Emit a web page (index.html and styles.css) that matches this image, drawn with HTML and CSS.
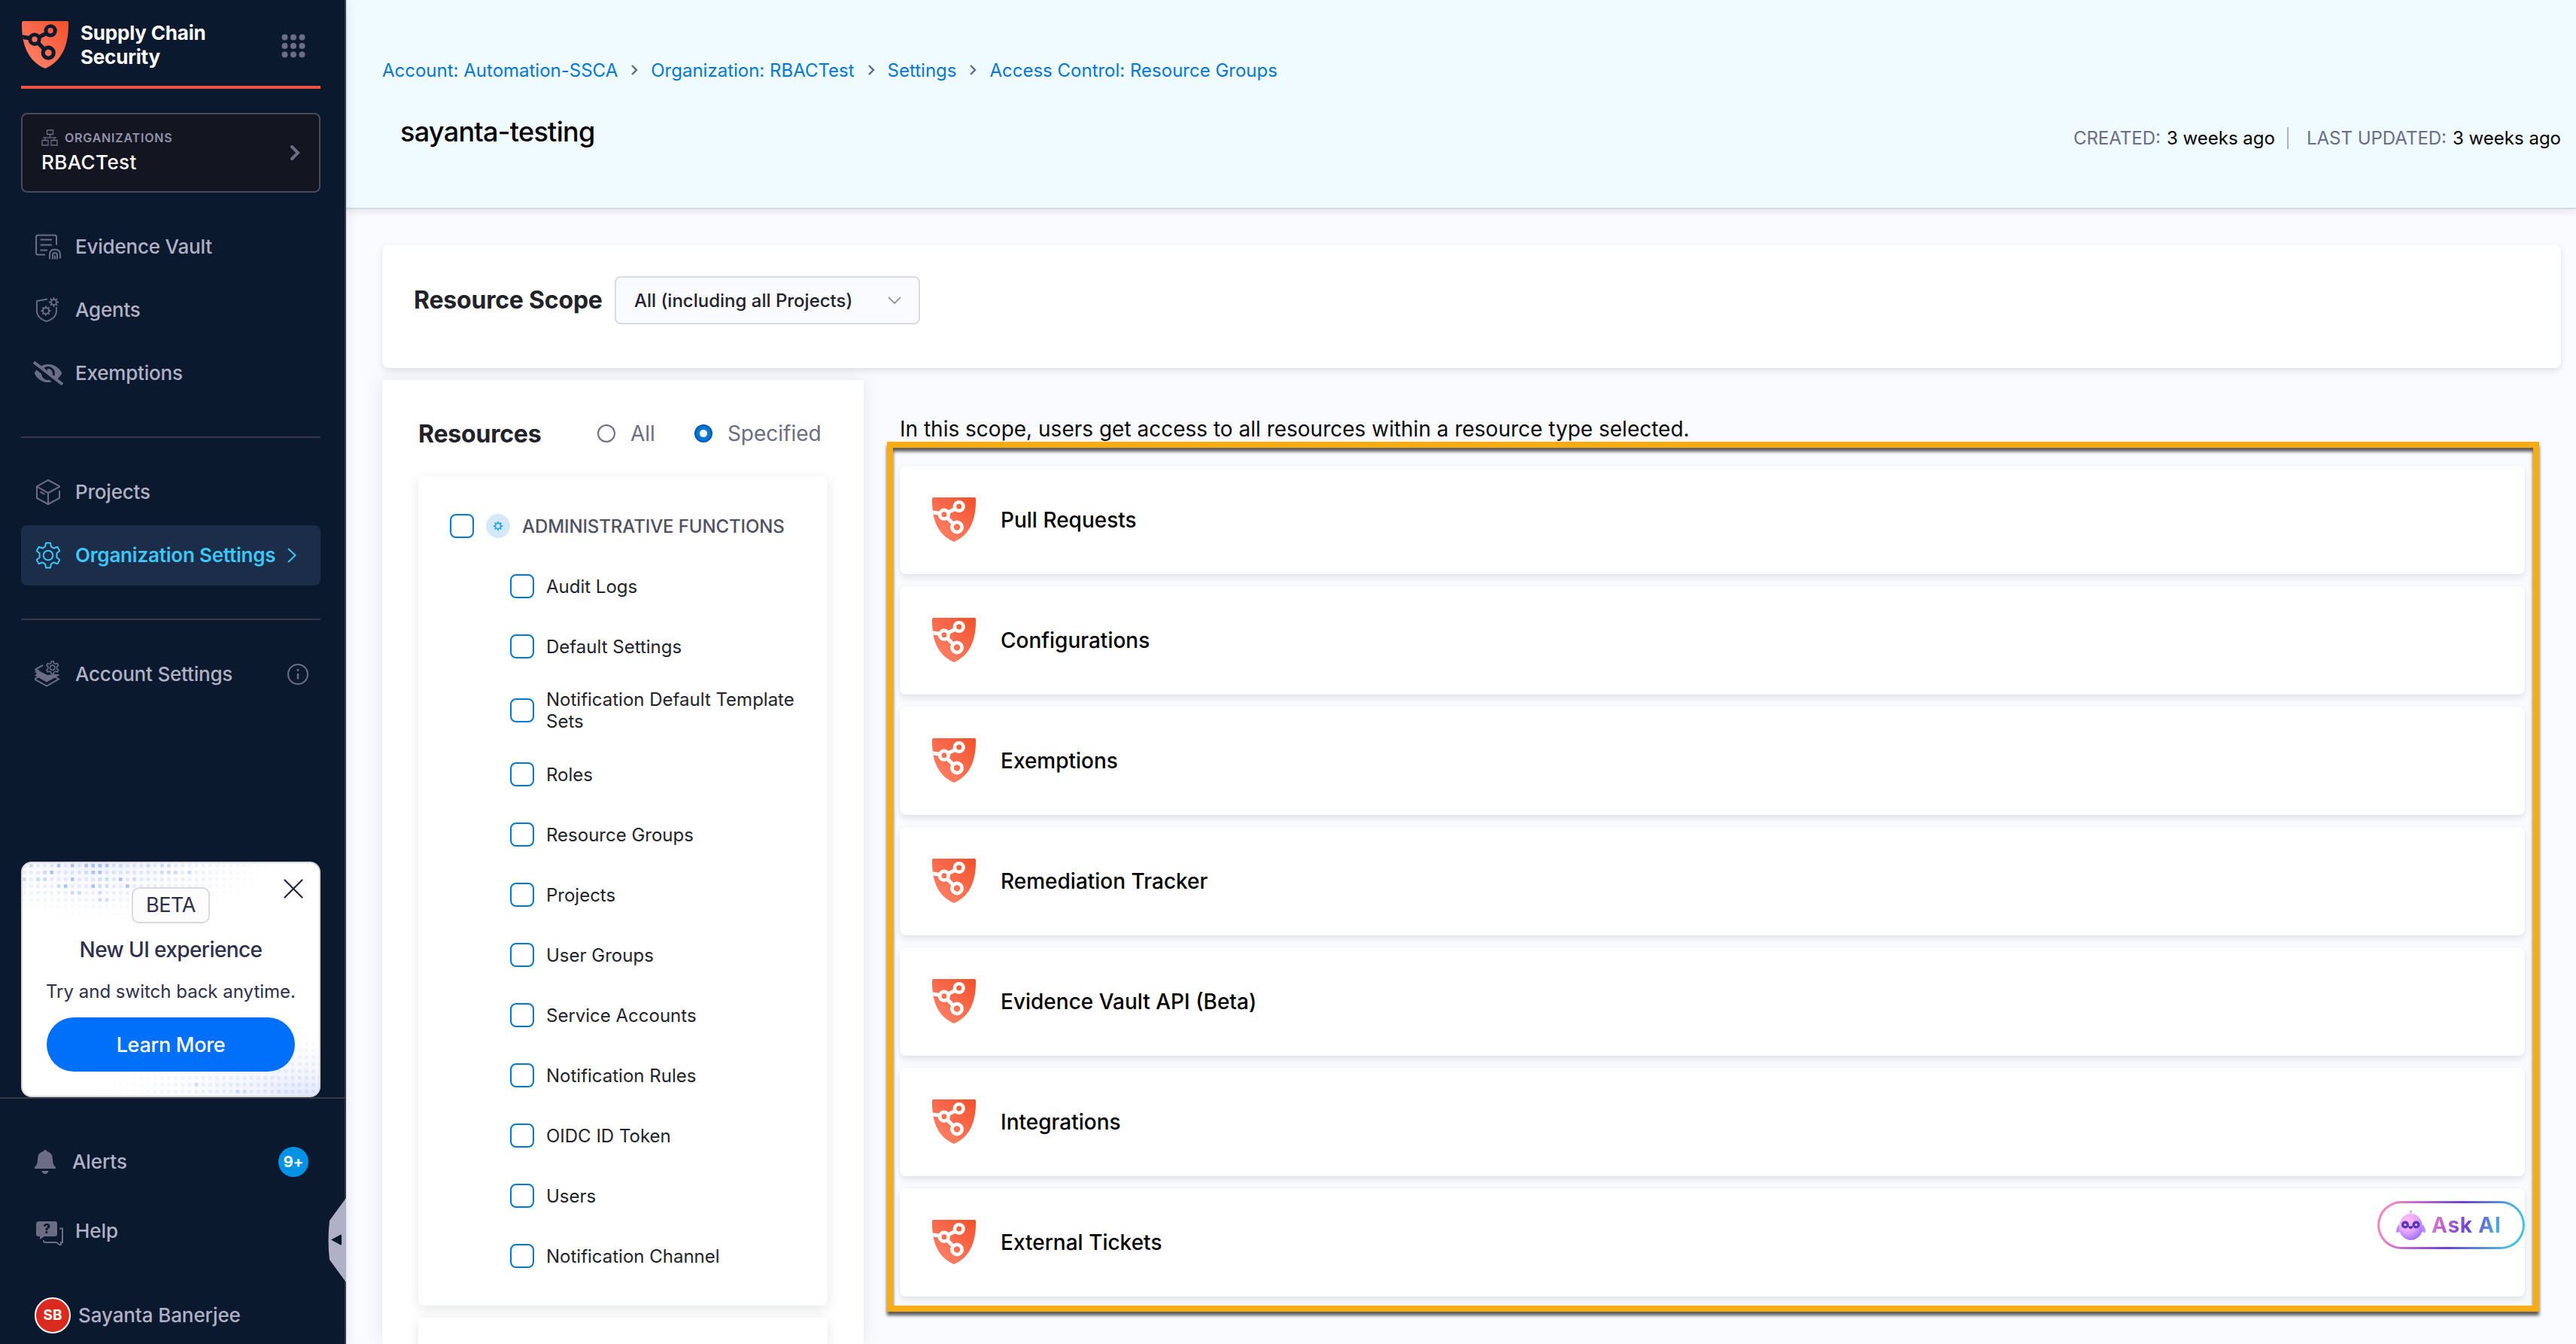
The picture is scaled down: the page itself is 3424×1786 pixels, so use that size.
FILE: index.html
```html
<!DOCTYPE html>
<html lang="en">
<head>
  <meta charset="UTF-8">
  <title>Resource Groups - sayanta-testing</title>
  <meta name="viewport" content="width=device-width, initial-scale=1.0">
  <link rel="stylesheet" href="styles.css">
</head>
<body>

  <!-- Shared icons -->
  <svg class="sprite" width="0" height="0">
    <defs>
      <linearGradient id="shield-fill" x1="1" y1="0" x2="0.2" y2="0.9">
        <stop offset="0" stop-color="#f24f2a"/>
        <stop offset="1" stop-color="#ff8066"/>
      </linearGradient>
      <clipPath id="shield-clip">
        <path d="M1.5 0h55Q58 0 58 1.500C58.500 27 52 49 29 59C6 49-.5 27 0 1.500Q0 0 1.500 0z"/>
      </clipPath>
    </defs>
    <symbol id="icon-shield" viewBox="0 0 58 59">
      <path fill="url(#shield-fill)" d="M1.500 0h55Q58 0 58 1.500C58.500 27 52 49 29 59C6 49-.5 27 0 1.500Q0 0 1.500 0z"/>
      <g clip-path="url(#shield-clip)" fill="none" stroke="currentColor">
        <path stroke-width="5" d="M-1 19.500l11 1.800M21 20l9-4.500M20 27l8 8"/>
        <circle cx="35.700" cy="12" r="5.800" stroke-width="4.600"/>
        <circle cx="15.900" cy="22.700" r="5.800" stroke-width="4.600"/>
        <circle cx="33" cy="39.500" r="6.600" stroke-width="4.800"/>
      </g>
    </symbol>
    <symbol id="icon-gear" viewBox="0 0 24 24">
      <path d="M10 1h4l.6 3.300 2.400 1.400 3.200-1.200 2 3.500-2.600 2.200v3.600l2.600 2.200-2 3.500-3.200-1.200-2.400 1.400-.6 3.300h-4l-.6-3.300L7 18.300l-3.200 1.200-2-3.500 2.600-2.200v-3.600L1.800 8l2-3.500L7 5.700l2.400-1.400z" fill="none" stroke="currentColor" stroke-linejoin="round"/>
      <circle cx="12" cy="12" r="4.200" fill="none" stroke="currentColor"/>
    </symbol>
  </svg>

  <div class="app">
    <aside class="sidebar">
      <div class="brand">
        <svg class="brand-logo"><use href="#icon-shield"/></svg>
        <div class="brand-name">Supply Chain<br>Security</div>
        <svg class="brand-grid" viewBox="0 0 32 32">
          <circle cx="4.500" cy="4.500" r="4"/><circle cx="16" cy="4.500" r="4"/><circle cx="27.500" cy="4.500" r="4"/>
          <circle cx="4.500" cy="16" r="4"/><circle cx="16" cy="16" r="4"/><circle cx="27.500" cy="16" r="4"/>
          <circle cx="4.500" cy="27.500" r="4"/><circle cx="16" cy="27.500" r="4"/><circle cx="27.500" cy="27.500" r="4"/>
        </svg>
      </div>

      <div class="org-box">
        <div class="org-info">
          <div class="org-label">
            <svg viewBox="0 0 22 22" width="22" height="22" fill="none" stroke="currentColor" stroke-width="1.300"><path d="M7.500 1h8v5.500h-8zM1 14.500h8V21H1zM13 14.500h8V21h-8zM11.500 6.500v4M2 10.800h18M5 11v3.500M17 11v3.500"/></svg>
            <span>ORGANIZATIONS</span>
          </div>
          <div class="org-name">RBACTest</div>
        </div>
        <svg class="org-arrow" viewBox="0 0 14 22"><path d="M3 3l8 8-8 8"/></svg>
      </div>

      <nav class="nav">
        <a class="nav-item">
          <svg viewBox="0 0 36 36"><path d="M29 15V4.500Q29 2 26.500 2h-22Q2 2 2 4.500v21Q2 28 4.500 28H14M7.500 8H23M7.500 15H23M7.500 22H17M20 34v-6q0-7 7-7t7 7v5M24 34v-5.500q0-3 3-3t3 3V34M27 29v5" transform="translate(0 .5)"/></svg>
          <span>Evidence Vault</span>
        </a>
        <a class="nav-item">
          <svg viewBox="0 0 36 36"><path stroke-width="1.800" d="M17 3.500L3 6v13q0 10 13 14 13-4 13-14v-5"/><g stroke-width="2"><circle cx="15" cy="19" r="4"/><path d="M15 12.500v2.500M15 23v2.500M8.500 19H11M19 19h2.500M10.400 14.400l1.800 1.800M17.800 21.800l1.800 1.800M19.600 14.400l-1.800 1.800M12.200 21.800l-1.800 1.800"/></g><g stroke-width="1.800"><circle cx="25.500" cy="7.500" r="3.500"/><path d="M25.500 1v3M25.500 11v3M19 7.500h3M29 7.500h3M21 3l2 2M28 10l2 2M30 3l-2 2M23 10l-2 2"/></g></svg>
          <span>Agents</span>
        </a>
        <a class="nav-item">
          <svg class="icon-eye" viewBox="0 0 640 512"><path d="M320 400c-75.850 0-137.250-58.710-142.900-133.110L72.200 185.820c-13.790 17.300-26.480 35.590-36.720 55.590a32.350 32.350 0 0 0 0 29.190C89.710 376.410 197.070 448 320 448c26.910 0 52.870-4 77.890-10.460L346 397.390a144.130 144.130 0 0 1-26 2.610zm313.820 58.100l-110.550-85.440a331.250 331.250 0 0 0 81.250-102.070 32.350 32.350 0 0 0 0-29.190C550.290 135.590 442.930 64 320 64a308.150 308.150 0 0 0-147.320 37.700L45.460 3.370A16 16 0 0 0 23 6.180L3.370 31.450A16 16 0 0 0 6.180 53.900l588.360 454.730a16 16 0 0 0 22.460-2.810l19.640-25.270a16 16 0 0 0-2.820-22.450zm-183.720-142l-39.300-30.380A94.750 94.750 0 0 0 416 256a94.760 94.760 0 0 0-121.310-92.210A47.650 47.650 0 0 1 304 192a46.640 46.640 0 0 1-1.540 10l-73.610-56.890A142.310 142.310 0 0 1 320 112a143.920 143.920 0 0 1 144 144c0 21.630-5.290 41.790-13.900 60.110z"/></svg>
          <span>Exemptions</span>
        </a>
        <hr>
        <a class="nav-item">
          <svg viewBox="0 0 36 36"><path d="M18 2l15 8v1L18 19 3 10.500zM3 10.500V26l15 8 15-8V16M18 19v15M7.500 17.500l6 3.300"/></svg>
          <span>Projects</span>
        </a>
        <a class="nav-item active">
          <svg class="icon-settings"><use href="#icon-gear"/></svg>
          <span>Organization Settings</span>
          <svg class="nav-arrow" viewBox="0 0 12 20"><path d="M1 1l9.500 9L1 19"/></svg>
        </a>
        <hr>
        <a class="nav-item">
          <svg viewBox="0 0 36 36"><path d="M11 6L1 11.500 6 14M27 21.500l5 3L16 33.500 0 24.500l5-3"/><path d="M0 14l4-1.500L17 19l10-1h5.500v1.500L16 28.500 0 19.500l3-2z" fill="currentColor" stroke="none"/><use href="#icon-gear" x="14.500" y="0" width="18.500" height="18.500" stroke-width="2"/></svg>
          <span>Account Settings</span>
          <svg class="nav-help" viewBox="0 0 28 28"><circle cx="14" cy="14" r="13"/><path d="M14 13v7.500M14 7v3" stroke-width="2.400"/></svg>
        </a>
      </nav>

      <div class="promo">
        <svg class="promo-dots" viewBox="0 0 394 309">
          <defs>
            <pattern id="dots" width="9.150" height="9.100" patternUnits="userSpaceOnUse"><rect y="1" width="4.500" height="4.500" fill="#bccdfa"/></pattern>
            <radialGradient id="fade-top" cx="0" cy="0" r="1" gradientTransform="translate(110 0) scale(230 75)" gradientUnits="userSpaceOnUse"><stop offset="0" stop-color="#fff" stop-opacity=".6"/><stop offset="1" stop-color="#fff" stop-opacity="0"/></radialGradient>
            <radialGradient id="fade-bottom" cx="0" cy="0" r="1" gradientTransform="translate(380 309) scale(290 90)" gradientUnits="userSpaceOnUse"><stop offset="0" stop-color="#fff" stop-opacity=".5"/><stop offset="1" stop-color="#fff" stop-opacity="0"/></radialGradient>
            <radialGradient id="glow-bottom" cx="0" cy="0" r="1" gradientTransform="translate(380 309) scale(250 85)" gradientUnits="userSpaceOnUse"><stop offset="0" stop-color="#e3e7fd"/><stop offset="1" stop-color="#fff" stop-opacity="0"/></radialGradient>
            <radialGradient id="glow-top" cx="0" cy="0" r="1" gradientTransform="translate(100 0) scale(190 70)" gradientUnits="userSpaceOnUse"><stop offset="0" stop-color="#eef1fe"/><stop offset="1" stop-color="#fff" stop-opacity="0"/></radialGradient>
            <mask id="dots-mask"><rect width="394" height="80" fill="url(#fade-top)"/><rect y="200" width="394" height="109" fill="url(#fade-bottom)"/></mask>
          </defs>
          <rect width="394" height="80" fill="url(#glow-top)"/>
          <rect y="200" width="394" height="109" fill="url(#glow-bottom)"/>
          <rect width="394" height="309" fill="url(#dots)" mask="url(#dots-mask)"/>
          <g stroke="#a9c1f8" stroke-width="4.500" fill="none">
            <path d="M45.800 3.200h4.500M64 3.200h4.500M82.400 3.200h4.500M91.500 3.200h4.500M100.600 3.200h4.500M109.800 3.200h4.500M36.600 12.300h4.500M91.500 12.300h4.500M100.600 12.300h4.500M64 21.400h4.500M128 21.400h4.500M54.900 30.500h4.500M91.500 30.500h4.500M137.200 30.500h4.500"/>
          </g>
          <g stroke="#ccdafb" stroke-width="4.500" fill="none">
            <path d="M9.200 3.200h4.500M128 3.200h4.500M164.700 3.200h4.500M183 3.200h4.500M192 3.200h4.500M27.400 12.300h4.500M82.400 12.300h4.500M183 12.300h4.500M192 12.300h4.500M201 12.300h4.500M219.600 12.300h4.500M0 21.400h4.500M18.300 21.400h4.500M27.400 21.400h4.500M100.600 21.400h4.500M109.800 21.400h4.500M146.400 21.400h4.500M45.800 30.500h4.500M100.600 30.500h4.500M109.800 30.500h4.500M64 39.600h4.500M73.200 39.600h4.500M100.600 39.600h4.500M100.600 48.700h4.500M109.800 48.700h4.500M228.700 294.300h4.500M283.600 303.400h4.500M292.800 303.400h4.500M338.500 303.400h4.500"/>
          </g>
        </svg>
        <svg class="promo-close" viewBox="0 0 26 26"><path d="M1.500 1.500l23 23M24.500 1.500l-23 23"/></svg>
        <div class="promo-badge">BETA</div>
        <div class="promo-title">New UI experience</div>
        <div class="promo-text">Try and switch back anytime.</div>
        <button class="promo-button">Learn More</button>
      </div>

      <div class="sidebar-footer">
        <div class="foot-row">
          <svg class="icon-bell" viewBox="0 0 28 32"><path d="M14 0q2 0 2.300 2Q24 3.500 24 13q0 7 4 10v2H0v-2q4-3 4-10Q4 3.500 11.700 2 12 0 14 0zM9.500 28h9q-1 4-4.500 4t-4.500-4z"/></svg>
          <span>Alerts</span>
          <span class="count">9+</span>
        </div>
        <div class="foot-row help">
          <svg class="icon-help" viewBox="0 0 36 32"><path d="M4 0h21q3 0 3 3v14q0 3-3 3H11l-6 4v-4H3q-3 0-3-3V4q0-4 4-4z"/><path d="M31 9.500h4V28h-2v3h-2l-4-3H12q-2 0-2-3" fill="none" stroke="#6b6d85" stroke-width="2"/><text x="14" y="16" text-anchor="middle">?</text></svg>
          <span>Help</span>
        </div>
        <div class="foot-row user">
          <span class="avatar">SB</span>
          <span>Sayanta Banerjee</span>
        </div>
      </div>

      <svg class="collapse" viewBox="0 0 24 112"><path d="M24 0v112L2 82Q-1 56 2 30z" fill="#b0b1c7"/><path d="M4 55.500l13-7q1 0 1 1v12q0 1-1 1z" fill="#07182b"/></svg>
    </aside>

    <main class="main">
      <header class="page-header">
        <div class="breadcrumbs">
          <a>Account: Automation-SSCA</a>
          <svg viewBox="0 0 10 14"><path d="M2 1l6 6-6 6"/></svg>
          <a>Organization: RBACTest</a>
          <svg viewBox="0 0 10 14"><path d="M2 1l6 6-6 6"/></svg>
          <a>Settings</a>
          <svg viewBox="0 0 10 14"><path d="M2 1l6 6-6 6"/></svg>
          <a>Access Control: Resource Groups</a>
        </div>
        <div class="title-row">
          <h1>sayanta-testing</h1>
          <div class="dates">
            <span class="date-label">CREATED:</span>
            <span>3 weeks ago</span>
            <i></i>
            <span class="date-label">LAST UPDATED:</span>
            <span>3 weeks ago</span>
          </div>
        </div>
      </header>

      <div class="content">
        <section class="scope-card">
          <h2>Resource Scope</h2>
          <div class="select">
            <span>All (including all Projects)</span>
            <svg viewBox="0 0 18 10"><path d="M1 1l8 8 8-8"/></svg>
          </div>
        </section>

        <div class="columns">
          <section class="resources">
            <div class="resources-head">
              <h2>Resources</h2>
              <label class="radio"><i></i>All</label>
              <label class="radio checked"><i></i>Specified</label>
            </div>
            <div class="category">
              <div class="category-head">
                <i class="checkbox"></i>
                <span class="category-icon"><svg viewBox="0 0 16 16"><circle cx="8" cy="8" r="4.200"/><path d="M8 1v2.500M8 12.500V15M1 8h2.500M12.500 8H15M3 3l2 2M11 11l2 2M13 3l-2 2M5 11l-2 2"/></svg></span>
                <span>ADMINISTRATIVE FUNCTIONS</span>
              </div>
              <div class="option"><i class="checkbox"></i><span>Audit Logs</span></div>
              <div class="option"><i class="checkbox"></i><span>Default Settings</span></div>
              <div class="option"><i class="checkbox"></i><span>Notification Default Template Sets</span></div>
              <div class="option"><i class="checkbox"></i><span>Roles</span></div>
              <div class="option"><i class="checkbox"></i><span>Resource Groups</span></div>
              <div class="option"><i class="checkbox"></i><span>Projects</span></div>
              <div class="option"><i class="checkbox"></i><span>User Groups</span></div>
              <div class="option"><i class="checkbox"></i><span>Service Accounts</span></div>
              <div class="option"><i class="checkbox"></i><span>Notification Rules</span></div>
              <div class="option"><i class="checkbox"></i><span>OIDC ID Token</span></div>
              <div class="option"><i class="checkbox"></i><span>Users</span></div>
              <div class="option"><i class="checkbox"></i><span>Notification Channel</span></div>
            </div>
            <div class="category next"></div>
          </section>

          <section class="selected">
            <p>In this scope, users get access to all resources within a resource type selected.</p>
            <div class="type-list">
              <div class="type-card"><svg><use href="#icon-shield"/></svg><span>Pull Requests</span></div>
              <div class="type-card"><svg><use href="#icon-shield"/></svg><span>Configurations</span></div>
              <div class="type-card"><svg><use href="#icon-shield"/></svg><span>Exemptions</span></div>
              <div class="type-card"><svg><use href="#icon-shield"/></svg><span>Remediation Tracker</span></div>
              <div class="type-card"><svg><use href="#icon-shield"/></svg><span>Evidence Vault API (Beta)</span></div>
              <div class="type-card"><svg><use href="#icon-shield"/></svg><span>Integrations</span></div>
              <div class="type-card"><svg><use href="#icon-shield"/></svg><span>External Tickets</span></div>
              <div class="highlight"></div>
              <button class="ask-ai">
                <svg viewBox="0 0 40 40">
                  <defs>
                    <radialGradient id="bot" cx=".35" cy=".25" r=".8"><stop offset="0" stop-color="#ffbdfc"/><stop offset=".55" stop-color="#e3a6fb"/><stop offset="1" stop-color="#9a6bff"/></radialGradient>
                  </defs>
                  <path d="M4 19q-4 4-4 11l5-1zM35 19q4 4 4 11l-5-1z" fill="#b98aff"/>
                  <circle cx="19.500" cy="2" r="2" fill="#e9b3fb"/>
                  <path d="M19.500 3v4" stroke="#e9b3fb" stroke-width="1.500"/>
                  <path d="M19.500 5q11 0 15 13 2 13-5 18-5 4-10 4t-10-4q-7-5-5-18 4-13 15-13z" fill="url(#bot)"/>
                  <circle cx="12" cy="19.500" r="5" fill="#5a35bb"/><circle cx="26.500" cy="19.500" r="5" fill="#5a35bb"/>
                  <circle cx="12" cy="19.500" r="1.600" fill="#e6c8ff"/><circle cx="26.500" cy="19.500" r="1.600" fill="#e6c8ff"/>
                  <path d="M16 21.500h6.500q-1 3.500-3.200 3.500T16 21.500z" fill="#51289c"/>
                </svg>
                <span>Ask AI</span>
              </button>
            </div>
          </section>
        </div>
      </div>
    </main>
  </div>
</body>
</html>
```
FILE: styles.css
```css
* {
  box-sizing: border-box;
}

body {
  margin: 0;
  font-family: Inter, "Open Sans", sans-serif;
  font-size: 24px;
  color: #22222a;
  background-color: #fafbff;
}

h1, h2, p {
  margin: 0;
}

svg {
  flex: none;
  display: block;
}

.sprite {
  position: absolute;
}

.app {
  display: flex;
  height: 1786px;
  overflow: hidden;
}

/* Sidebar */
.sidebar {
  position: relative;
  z-index: 2;
  flex: none;
  display: flex;
  flex-direction: column;
  width: 460px;
  background-color: #0b192f;
  border-right: 2px solid #383946;
  box-shadow: 0 0 14px rgba(40,41,61,0.14);
  color: #b0b1c4;
}

.brand {
  display: flex;
  align-items: flex-start;
  height: 118px;
  margin: 0 32px 0 28px;
  padding: 28px 20px 0 1px;
  border-bottom: 4px solid #f05340;
}

.brand-logo {
  width: 62px;
  height: 63px;
  color: #0b192f;
}

.brand-name {
  flex: 1;
  margin-left: 16px;
  font-size: 26px;
  line-height: 32px;
  font-weight: 700;
  letter-spacing: -0.2px;
  color: #fff;
}

.brand-grid {
  width: 32px;
  height: 32px;
  margin-top: 17px;
  fill: #6b6d85;
}

.org-box {
  display: flex;
  align-items: center;
  justify-content: space-between;
  height: 106px;
  margin: 32px 32px 32px 28px;
  padding: 0 25px;
  background-color: #131620;
  border: 2px solid #4a4a5c;
  border-radius: 8px;
}

.org-info {
  margin-top: -3px;
}

.org-label {
  display: flex;
  align-items: center;
  gap: 9px;
  height: 24px;
  font-size: 16px;
  font-weight: 600;
  letter-spacing: 0.8px;
  color: #9293ab;
}

.org-label svg {
  color: #6b6d85;
}

.org-name {
  margin-top: 5px;
  font-size: 26px;
  line-height: 32px;
  font-weight: 500;
  letter-spacing: 0.4px;
  color: #fff;
}

.org-arrow {
  width: 14px;
  height: 22px;
  margin-top: -1px;
  fill: none;
  stroke: #6b6d85;
  stroke-width: 4;
  stroke-linecap: round;
}

.nav {
  display: flex;
  flex-direction: column;
  gap: 4px;
  margin: 0 32px 0 28px;
}

.nav hr {
  width: 100%;
  margin: 40px 0 28px;
  border: 0;
  border-top: 2px solid #383946;
}

.nav-item {
  display: flex;
  align-items: center;
  height: 80px;
  padding: 0 0 1px 18px;
  border-radius: 8px;
  font-size: 26px;
  font-weight: 500;
  letter-spacing: -0.2px;
}

.nav-item svg {
  width: 36px;
  height: 36px;
  margin-right: 18px;
  fill: none;
  stroke: currentColor;
  stroke-width: 2;
  color: #6b6d85;
}

.nav-item .icon-eye {
  width: 40px;
  height: 32px;
  margin: 0 16px 0 -2px;
  fill: currentColor;
  stroke: none;
}

.nav-item.active {
  background-color: #1b2d48;
  color: #3dc7f6;
  font-weight: 600;
}

.nav-item.active svg {
  color: #3dc7f6;
}

.nav-item .icon-settings {
  stroke-width: 1.3;
}

.nav-item .nav-arrow {
  width: 12px;
  height: 20px;
  margin: 0 0 0 16px;
}

.nav-item .nav-help {
  width: 28px;
  height: 28px;
  margin: 0 16px 0 auto;
}

/* Beta promo */
.promo {
  position: relative;
  display: flex;
  flex-direction: column;
  align-items: center;
  height: 313px;
  margin: auto 32px 0 28px;
  padding-top: 32px;
  background-color: #fff;
  border: 2px solid #d9d9de;
  border-radius: 14px;
  color: #2c304d;
  overflow: hidden;
}

.promo > div,
.promo-button {
  position: relative;
}

.promo-dots {
  position: absolute;
  inset: 0;
}

.promo-close {
  position: absolute;
  top: 21px;
  right: 21px;
  width: 26px;
  height: 26px;
  stroke: #22263f;
  stroke-width: 2.2;
  stroke-linecap: round;
}

.promo-badge {
  width: 104px;
  height: 48px;
  border: 2px solid #d9d9de;
  border-radius: 10px;
  background-color: #fcfcfd;
  font-size: 27px;
  line-height: 43px;
  text-align: center;
  letter-spacing: -0.4px;
}

.promo-title {
  margin-top: 17px;
  font-size: 28px;
  line-height: 36px;
  font-weight: 500;
  letter-spacing: -0.6px;
}

.promo-text {
  margin-top: 22px;
  font-size: 24px;
  line-height: 32px;
}

.promo-button {
  width: 330px;
  height: 72px;
  margin-top: 18px;
  border: 0;
  border-radius: 36px;
  background-color: #006ffa;
  color: #fff;
  font: 500 27px Inter, sans-serif;
  letter-spacing: -0.3px;
}

.sidebar-footer {
  height: 328px;
  padding: 44px 48px 0 46px;
  border-top: 2px solid #383946;
  font-size: 26px;
  font-weight: 500;
  letter-spacing: -0.1px;
}

.foot-row {
  display: flex;
  align-items: center;
  height: 79px;
}

.icon-bell {
  width: 28px;
  height: 32px;
  margin-right: 22px;
  fill: #6b6d85;
}

.count {
  width: 40px;
  height: 40px;
  margin-left: auto;
  border-radius: 50%;
  background-color: #0092e4;
  color: #fff;
  font-size: 20px;
  line-height: 40px;
  font-weight: 700;
  text-align: center;
}

.foot-row.help {
  margin-top: 13px;
}

.icon-help {
  width: 36px;
  height: 32px;
  margin: 6px 16px 0 2px;
  fill: #6b6d85;
}

.icon-help text {
  font-size: 17px;
  font-weight: 800;
  fill: #0b192f;
}

.foot-row.user {
  margin-top: 33px;
}

.avatar {
  width: 48px;
  height: 48px;
  margin-right: 10px;
  border: 2px solid #fff;
  border-radius: 50%;
  background-color: #da291d;
  color: #fff;
  font-size: 19px;
  line-height: 44px;
  font-weight: 700;
  text-align: center;
}

.collapse {
  position: absolute;
  right: -2px;
  top: 1592px;
  width: 24px;
  height: 112px;
}

/* Page header */
.main {
  flex: 1;
  min-width: 0;
}

.page-header {
  height: 278px;
  padding: 76px 20px 0 48px;
  background-color: #effbff;
  border-bottom: 2px solid #d9dae5;
  box-shadow: 0 2px 10px rgba(40,41,61,0.12);
}

.breadcrumbs {
  display: flex;
  align-items: center;
  gap: 17px;
  height: 34px;
  color: #0278d5;
}

.breadcrumbs svg {
  width: 10px;
  height: 14px;
  fill: none;
  stroke: #5f6b80;
  stroke-width: 2.4;
}

.title-row {
  display: flex;
  justify-content: space-between;
  margin-top: 42px;
  padding-left: 24px;
}

h1 {
  font-size: 36px;
  line-height: 47px;
  font-weight: 500;
  letter-spacing: -0.7px;
  color: #000;
}

.dates {
  display: flex;
  align-items: center;
  gap: 8px;
  height: 62px;
  color: #000;
}

.dates i {
  width: 2px;
  height: 29px;
  margin: 0 16px 0 8px;
  background-color: #b0b1c4;
}

.date-label {
  color: #6b6d85;
}

/* Content */
.content {
  padding: 47px 20px 0 48px;
}

h2 {
  font-size: 32px;
  font-weight: 700;
  letter-spacing: -0.2px;
}

.scope-card {
  display: flex;
  align-items: flex-start;
  height: 164px;
  padding: 42px;
  border-radius: 8px;
  background-color: #fff;
  box-shadow: 0 4px 8px rgba(96,97,112,0.16), 0 0 2px rgba(40,41,61,0.06);
}

.scope-card h2 {
  width: 267px;
  line-height: 64px;
}

.select {
  display: flex;
  align-items: center;
  justify-content: space-between;
  width: 406px;
  height: 64px;
  padding: 0 23px 0 24px;
  border: 2px solid #d9dae5;
  border-radius: 8px;
  background-color: #fafbff;
  font-weight: 500;
}

.select svg {
  width: 18px;
  height: 10px;
  fill: none;
  stroke: #9293ab;
  stroke-width: 1.8;
}

.columns {
  display: flex;
  margin-top: 16px;
}

.resources {
  flex: none;
  width: 640px;
  height: 1281px;
  padding: 40px 48px 0;
  background-color: #fff;
  box-shadow: 0 0 18px rgba(96,97,112,0.14);
}

.resources-head {
  display: flex;
  align-items: center;
  height: 62px;
  margin-bottom: 26px;
}

.resources-head h2 {
  width: 238px;
}

.radio {
  display: flex;
  align-items: center;
  gap: 20px;
  margin-right: 52px;
  font-size: 28px;
  color: #6b6d85;
}

.radio i {
  width: 24px;
  height: 24px;
  border: 2px solid #6b6d85;
  border-radius: 50%;
}

.radio.checked {
  margin-right: 0;
}

.radio.checked i {
  border: 2px solid #0058b8;
  background: radial-gradient(circle, #fff 4.5px, #0278d5 5.5px);
}

.category {
  height: 1102px;
  padding: 33px 42px 0;
  border-radius: 8px;
  background-color: #fff;
  box-shadow: 0 4px 16px rgba(96,97,112,0.16);
}

/* Cut off by the bottom of the window */
.category.next {
  height: 35px;
  margin-top: 16px;
  padding: 0;
  border-radius: 8px 8px 0 0;
}

.category-head {
  display: flex;
  align-items: center;
  gap: 16px;
  height: 66px;
  margin-bottom: 7px;
  font-weight: 500;
  letter-spacing: -0.1px;
  color: #4f5162;
  white-space: nowrap;
}

.checkbox {
  flex: none;
  width: 32px;
  height: 32px;
  border: 2px solid #0278d5;
  border-radius: 8px;
}

.category-icon {
  display: flex;
  align-items: center;
  justify-content: center;
  width: 32px;
  height: 32px;
  border-radius: 50%;
  background-color: #d3e9fa;
}

.category-icon svg {
  width: 14px;
  height: 14px;
  fill: none;
  stroke: #2aa5f5;
  stroke-width: 2.2;
}

.option {
  display: flex;
  align-items: center;
  gap: 16px;
  min-height: 80px;
  margin-right: -20px;
  padding: 16px 0 16px 80px;
  line-height: 29px;
}

.selected {
  flex: 1;
  padding: 44px 0 0 48px;
}

.selected p {
  font-size: 28px;
  line-height: 42px;
  color: #0b0b0d;
}

.type-list {
  position: relative;
  display: flex;
  flex-direction: column;
  gap: 16px;
  margin: 28px 48px 0 0;
}

.type-card {
  display: flex;
  align-items: center;
  gap: 33px;
  height: 144px;
  padding-left: 43px;
  border-radius: 8px;
  background-color: #fff;
  box-shadow: 0 4px 8px rgba(96,97,112,0.16), 0 0 2px rgba(40,41,61,0.06);
  color: #000;
  font-size: 28px;
  font-weight: 500;
}

.type-card svg {
  width: 58px;
  height: 59px;
  margin-top: -1px;
  color: #fff;
}

/* Frame drawn over the resource types */
.highlight {
  position: absolute;
  inset: -32px -19px -20px -17px;
  border: 8px solid #f9ab10;
  filter: drop-shadow(0 5px 2px rgba(0,0,0,0.65));
  pointer-events: none;
}

.ask-ai {
  position: absolute;
  right: 0;
  bottom: 63px;
  display: flex;
  align-items: center;
  gap: 7px;
  width: 196px;
  height: 64px;
  padding: 0 0 0 22px;
  border: 3px solid transparent;
  border-radius: 32px;
  background: linear-gradient(#fff, #fff) padding-box, linear-gradient(110deg, #f582c2 10%, #6d42d8 52%, #46c2df 90%) border-box;
  font: 700 28px Inter, sans-serif;
}

.ask-ai svg {
  width: 40px;
  height: 40px;
}

.ask-ai span {
  letter-spacing: 0.8px;
  background: linear-gradient(110deg, #ee7dc2, #6d42d8 52%, #46c2df);
  background-clip: text;
  -webkit-background-clip: text;
  color: transparent;
}
```
